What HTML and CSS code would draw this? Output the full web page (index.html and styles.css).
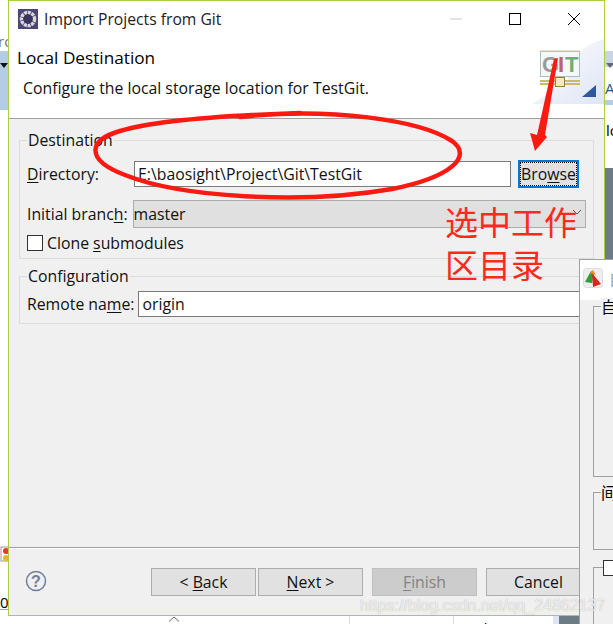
FILE: index.html
```html
<!DOCTYPE html>
<html lang="en">
<head>
<meta charset="utf-8">
<title>Import Projects from Git</title>
<link rel="stylesheet" href="styles.css">
</head>
<body>
<div class="desktop">
  <div class="back back-left">
    <span class="back-ro">ro</span>
    <div class="back-blue"><span class="back-tri"></span></div>
    <svg class="back-icon" width="8" height="16" viewBox="0 0 8 16"><rect x="1" y="1" width="10" height="14" fill="#fff" stroke="#999"/><circle cx="6" cy="5" r="3" fill="#e33"/><circle cx="6" cy="12" r="3" fill="#f0b030"/></svg>
    <span class="back-zero">0</span>
    <span class="back-rule"></span>
  </div>
  <div class="back back-right">
    <div class="back-strip"><span class="back-tri back-tri-r"></span><span class="back-a">A</span></div>
    <span class="back-lo">lo</span>
    <div class="back-dark"></div>
  </div>
  <div class="back back-bottom">
    <span class="bb-text bb-1">Descripti</span>
    <span class="bb-line bb-l1"></span>
    <span class="bb-text bb-2">Resou</span>
    <span class="bb-line bb-l2"></span>
    <span class="bb-text bb-3">Path</span>
    <span class="bb-tint"></span>
    <span class="bb-dark"></span>
    <svg class="bb-caret" width="12" height="6" viewBox="0 0 12 6"><path d="M1 5.500 6 1l5 4.500" fill="none" stroke="#666"/></svg>
  </div>

  <section class="dialog">
    <header class="titlebar">
      <svg class="app-icon" width="20" height="20" viewBox="0 0 20 20"><rect width="20" height="20" fill="#4d4478"/><circle cx="10" cy="10" r="6.500" fill="#2c2748" stroke="#d8d8dc" stroke-width="3.500" stroke-dasharray="3 .7"/><circle cx="10" cy="10" r="4.500" fill="#3a3560"/></svg>
      <span class="title">Import Projects from Git</span>
      <div class="win-btns">
        <svg width="16" height="16" viewBox="0 0 16 16"><path d="M2 8h12" stroke="#c8c8c8"/></svg>
        <svg width="16" height="16" viewBox="0 0 16 16"><rect x="2.500" y="2.500" width="11" height="11" fill="none" stroke="#000"/></svg>
        <svg width="16" height="16" viewBox="0 0 16 16"><path d="M2 2l12 12M14 2 2 14" stroke="#000" fill="none"/></svg>
      </div>
    </header>
    <div class="banner">
      <h1 class="banner-title">Local Destination</h1>
      <p class="banner-desc">Configure the local storage location for TestGit.</p>
      <svg class="git-art" width="76" height="66" viewBox="0 0 76 66">
        <defs><linearGradient id="gl" x1="0" y1="0" x2="1" y2="1"><stop offset="0" stop-color="#fff"/><stop offset="1" stop-color="#dfe5f4"/></linearGradient></defs>
        <path d="M76 0C52 6 40 24 40 42L4 65h72z" fill="url(#gl)"/>
        <rect x="12.500" y="12.500" width="39" height="25" fill="#f4f8f8" stroke="#a9bcc0"/>
        <path d="M12 12h40" stroke="#d9c29a"/>
        <text x="14" y="33" class="git-g">G</text><text x="30" y="33" class="git-i">I</text><text x="37" y="33" class="git-t">T</text>
        <path d="M12 42h40M12 45h40" stroke="#c9bb6a" stroke-width="2"/>
        <rect x="27.500" y="38.500" width="9" height="9" fill="#f5e9bc" stroke="#8f7f3f"/>
        <path d="M54 58l14-12v12z" fill="#2f5a98"/>
      </svg>
    </div>
    <main class="content">
      <fieldset class="group group-dest">
        <legend class="legend">Destination</legend>
        <div class="row row-dir">
          <label class="label"><u>D</u>irectory:</label>
          <div class="input input-dir">E:\baosight\Project\Git\TestGit</div>
          <button class="browse">Bro<u>w</u>se</button>
        </div>
        <div class="row row-branch">
          <label class="label">Initial branc<u>h</u>:</label>
          <div class="select">master
            <svg class="chev" width="10" height="6" viewBox="0 0 10 6"><path d="M1 1l4 4 4-4" fill="none" stroke="#555"/></svg>
          </div>
        </div>
        <div class="row row-check">
          <span class="check"></span>
          <label class="label">Clone <u>s</u>ubmodules</label>
        </div>
      </fieldset>
      <fieldset class="group group-conf">
        <legend class="legend">Configuration</legend>
        <div class="row row-remote">
          <label class="label">Remote na<u>m</u>e:</label>
          <div class="input input-remote">origin</div>
        </div>
      </fieldset>
    </main>
    <footer class="footer">
      <svg class="help" width="22" height="22" viewBox="0 0 22 22"><circle cx="11" cy="11" r="9.500" fill="none" stroke="#6f7f9c" stroke-width="1.500"/><text x="11" y="16.500" class="help-q">?</text></svg>
      <div class="actions">
        <button class="btn btn-back">&lt; <u>B</u>ack</button>
        <button class="btn btn-next"><u>N</u>ext &gt;</button>
        <button class="btn btn-finish" disabled><u>F</u>inish</button>
        <button class="btn btn-cancel">Cancel</button>
      </div>
    </footer>
  </section>

  <section class="side-window">
    <header class="side-title">
      <svg width="20" height="20" viewBox="0 0 20 20"><rect x=".5" y=".5" width="19" height="19" rx="3" fill="#eee" stroke="#ddd"/><path d="M2 14 8 3l3 2-2 10z" fill="#2e9e3a"/><path d="M9 5l9 11-8 3z" fill="#d8261c"/><path d="M7 5l3-3 3 5z" fill="#f08a24"/></svg>
      <span class="side-name">自</span>
    </header>
    <div class="side-body">
      <div class="side-group side-g1"><span class="side-cap">自</span></div>
      <div class="side-group side-g2"><span class="side-cap">间</span></div>
      <div class="side-group side-g3"><span class="side-box"></span></div>
    </div>
  </section>

  <svg class="marks" width="613" height="624" viewBox="0 0 613 624">
    <path d="M240 117C330 107 420 120 452 141 473 156 452 177 392 189 300 205 180 197 125 175 85 160 88 140 120 131 150 122 210 116 300 113" fill="none" stroke="#fb1a12" stroke-width="4.500" stroke-linecap="round"/>
    <path d="M554 59 558 58 545 135 547 137 535 151 530 133 537 135z" fill="#fb1a12"/>
  </svg>
  <div class="note">选中工作<br>区目录</div>
  <div class="watermark">https://blog.csdn.net/qq_24862137</div>
</div>
</body>
</html>
```
FILE: styles.css
```css
* { box-sizing: border-box; }
html, body { margin: 0; padding: 0; }
body { background: #fff; font-family: "Open Sans", "Noto Sans CJK SC", sans-serif; color: #000; }
.desktop { position: relative; width: 613px; height: 624px; overflow: hidden; background: #fff; }
u { text-underline-offset: 2px; }

.back { position: absolute; font-size: 15px; }
.back-left { left: 0; top: 0; width: 9px; height: 624px; overflow: hidden; }
.back-ro { position: absolute; left: -2px; top: 31px; color: #777; }
.back-blue { position: absolute; left: 0; top: 51px; width: 9px; height: 59px; background: #b5cde4; }
.back-tri { position: absolute; left: 0; top: 12px; border: 4px solid transparent; border-top: 5px solid #111; border-bottom: 0; }
.back-tri-r { border-top-color: #667; left: 1px; }
.back-icon { position: absolute; left: 0; top: 546px; }
.back-zero { position: absolute; left: 0; top: 592px; }
.back-rule { position: absolute; left: 0; top: 609px; width: 9px; height: 1px; background: #aaa; }
.back-right { left: 604px; top: 0; width: 9px; height: 624px; overflow: hidden; }
.back-strip { position: absolute; left: 1px; top: 51px; width: 8px; height: 54px; background: linear-gradient(#c8d6e4 0 30%, #fff 30% 90%, #b5cde4 90%); }
.back-a { position: absolute; left: 0; top: 27px; font-size: 15px; color: #2c5a88; }
.back-lo { position: absolute; left: 2px; top: 120px; }
.back-dark { position: absolute; left: 1px; top: 168px; width: 8px; height: 456px; background: #6d7b84; }
.back-bottom { left: 0; top: 616px; width: 613px; height: 8px; background: #fff; overflow: hidden; }
.bb-text { position: absolute; top: 5px; font-size: 15px; line-height: 15px; }
.bb-1 { left: 7px; }
.bb-2 { left: 356px; }
.bb-3 { left: 461px; }
.bb-line { position: absolute; top: 0; width: 1px; height: 8px; background: #dcdcdc; }
.bb-l1 { left: 349px; }
.bb-l2 { left: 453px; }
.bb-tint { position: absolute; left: 553px; top: 0; width: 6px; height: 8px; background: #dde4f5; }
.bb-dark { position: absolute; left: 559px; top: 0; width: 21px; height: 8px; background: #6d7b84; }
.bb-caret { position: absolute; left: 168px; top: 0; }

.dialog { position: absolute; left: 8px; top: 0; width: 597px; height: 616px; display: flex; flex-direction: column; background: #f0f0f0; border: 1px solid #a9d03c; }
.titlebar { height: 38px; flex: none; display: flex; align-items: center; background: #fff; padding: 0 0 2px 9px; }
.app-icon { flex: none; }
.title { margin-left: 6px; font-size: 15.700px; color: #222; }
.win-btns { margin-left: auto; margin-right: 22px; display: flex; gap: 43px; }
.banner { position: relative; height: 80px; flex: none; background: #fff; border-bottom: 1px solid #a0a0a0; padding-left: 8px; }
.banner-title { margin: 8px 0 0; font-size: 17.200px; font-weight: 400; line-height: 22px; }
.banner-desc { margin: 9px 0 0 6px; font-size: 15.800px; line-height: 20px; color: #111; }
.git-art { position: absolute; right: 0; top: 0; }
.git-g, .git-i, .git-t { font-family: "Liberation Sans", sans-serif; font-weight: 700; font-size: 22px; }
.git-g { fill: #9a9a9a; }
.git-i { fill: #c0606a; }
.git-t { fill: #6fae72; }
.help-q { font-family: "Liberation Sans", sans-serif; font-weight: 700; font-size: 16px; text-anchor: middle; fill: #6f7f9c; }

.content { flex: 1; padding: 11px 10px 0; }
.group { margin: 0; padding: 0 7px; border: 1px solid #dcdcdc; min-width: 0; }
.group-dest { height: 129px; }
.group-conf { height: 58px; margin-top: 7px; }
.legend { padding: 0 1px; font-size: 15.800px; line-height: 20px; color: #111; }
.row { display: flex; align-items: center; font-size: 15.800px; }
.label { white-space: nowrap; color: #111; }
.row-dir { height: 27px; margin-top: 10px; }
.input { background: #fff; border: 1px solid #7a7a7a; height: 26px; padding-left: 3px; line-height: 24px; font-size: 15.800px; color: #111; }
.input-dir { margin-left: 35px; width: 377px; }
.browse { margin-left: 7px; width: 61px; height: 28px; padding: 0; font: inherit; font-size: 15.800px; color: #111; background: #e1e1e1; border: 2px solid #0078d7; outline: 1px dotted #000; outline-offset: -3px; }
.row-branch { margin-top: 13px; }
.select { position: relative; margin-left: 5px; width: 457px; height: 28px; padding-left: 0; background: #e0e0e0; border: 1px solid #adadad; line-height: 26px; color: #111; }
.chev { position: absolute; right: 3px; top: 8px; }
.row-check { margin-top: 4px; gap: 4px; }
.check { width: 16px; height: 16px; background: #fff; border: 1px solid #333; flex: none; }
.row-remote { margin-top: 5px; }
.input-remote { margin-left: 4px; width: 449px; }

.footer { position: relative; height: 68px; flex: none; border-top: 1px solid #a0a0a0; box-shadow: inset 0 1px 0 #fff; display: flex; align-items: flex-start; }
.help { margin: 22px 0 0 16px; }
.actions { position: absolute; left: 142px; top: 20px; display: flex; gap: 2px; }
.btn { width: 105px; height: 28px; padding: 0; font: inherit; font-size: 15.800px; color: #111; background: #e1e1e1; border: 1px solid #adadad; }
.btn-finish { margin-left: 7px; background: #ccc; border-color: #bfbfbf; color: #838383; }
.btn-cancel { margin-left: 7px; }

.side-window { position: absolute; left: 579px; top: 259px; width: 60px; height: 380px; background: #f0f0f0; border: 1px solid #a0a0a0; }
.side-title { height: 40px; background: #fff; display: flex; align-items: center; padding: 0 0 4px 3px; gap: 6px; }
.side-name { font-size: 15px; color: #999; flex: none; }
.side-body { position: relative; }
.side-group { position: absolute; left: 13px; width: 60px; border: 1px solid #a0a0a0; background: #f0f0f0; }
.side-g1 { top: 6px; height: 171px; }
.side-g2 { top: 192px; height: 58px; }
.side-g3 { top: 267px; height: 80px; }
.side-cap { position: absolute; left: 7px; top: -9px; font-size: 15.800px; line-height: 18px; background: #f0f0f0; }
.side-box { position: absolute; left: 9px; top: -8px; width: 15px; height: 16px; background: #fff; border: 1px solid #333; }

.marks { position: absolute; left: 0; top: 0; pointer-events: none; }
.note { position: absolute; left: 445px; top: 200px; font-family: "Noto Sans CJK SC", sans-serif; font-size: 33px; line-height: 43px; color: #fb2a1c; }
.watermark { position: absolute; left: 360px; top: 596px; font-family: "Liberation Sans", sans-serif; font-size: 16px; line-height: 20px; color: rgba(255,255,255,.8); text-shadow: 0 0 1px rgba(110,110,110,.6); white-space: nowrap; }
```
